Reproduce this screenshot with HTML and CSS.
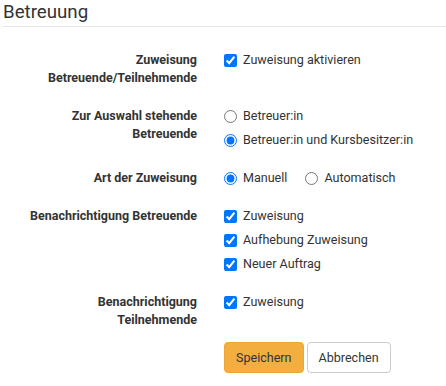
FILE: index.html
```html
<!DOCTYPE html>
<html lang="de">
<head>
<meta charset="utf-8">
<title>Betreuung</title>
<link rel="stylesheet" href="styles.css">
</head>
<body>
<div class="page">
  <h2 class="title">Betreuung</h2>
  <form class="form">
    <div class="row">
      <div class="label">Zuweisung<br>Betreuende/Teilnehmende</div>
      <div class="controls">
        <label class="opt"><input type="checkbox" checked><span>Zuweisung aktivieren</span></label>
      </div>
    </div>
    <div class="row">
      <div class="label">Zur Auswahl stehende<br>Betreuende</div>
      <div class="controls">
        <label class="opt"><input type="radio" name="wahl"><span>Betreuer:in</span></label>
        <label class="opt"><input type="radio" name="wahl" checked><span>Betreuer:in und Kursbesitzer:in</span></label>
      </div>
    </div>
    <div class="row">
      <div class="label">Art der Zuweisung</div>
      <div class="controls inline">
        <label class="opt"><input type="radio" name="art" checked><span>Manuell</span></label>
        <label class="opt"><input type="radio" name="art"><span>Automatisch</span></label>
      </div>
    </div>
    <div class="row">
      <div class="label">Benachrichtigung Betreuende</div>
      <div class="controls">
        <label class="opt"><input type="checkbox" checked><span>Zuweisung</span></label>
        <label class="opt"><input type="checkbox" checked><span>Aufhebung Zuweisung</span></label>
        <label class="opt"><input type="checkbox" checked><span>Neuer Auftrag</span></label>
      </div>
    </div>
    <div class="row last">
      <div class="label">Benachrichtigung<br>Teilnehmende</div>
      <div class="controls">
        <label class="opt"><input type="checkbox" checked><span>Zuweisung</span></label>
      </div>
    </div>
    <div class="row buttons">
      <div></div>
      <div class="btns">
        <button type="button" class="btn primary">Speichern</button>
        <button type="button" class="btn">Abbrechen</button>
      </div>
    </div>
  </form>
</div>
</body>
</html>
```
FILE: styles.css
```css
html, body {
  margin: 0;
  padding: 0;
  background: #fff;
}
body {
  font-family: Roboto, "Liberation Sans", Arial, sans-serif;
  color: #333;
  font-size: 12.55px;
}
.page {
  padding-left: 3px;
}
.title {
  margin: 0;
  font-size: 18.7px;
  font-weight: 400;
  line-height: 24px;
  padding-bottom: 2px;
  border-bottom: 1px solid #e5e5e5;
  color: #333;
}
.form {
  margin-top: 24px;
}
.row {
  display: grid;
  grid-template-columns: 194px 1fr;
  column-gap: 27px;
  margin-bottom: 20px;
}
.row.last {
  margin-bottom: 13px;
}
.label {
  font-size: 12.5px;
  font-weight: 700;
  line-height: 18px;
  text-align: right;
}
.controls {
  display: flex;
  flex-direction: column;
  gap: 6px;
}
.controls.inline {
  flex-direction: row;
  gap: 18px;
}
.opt {
  display: flex;
  align-items: center;
  gap: 6px;
  line-height: 18px;
}
.opt input {
  margin: 0;
  width: 13px;
  height: 13px;
  accent-color: #0075ff;
}
.btns {
  display: flex;
  gap: 3px;
}
.btn {
  font-family: inherit;
  font-size: 12.55px;
  color: #333;
  background: #fff;
  border: 1px solid #ccc;
  border-radius: 4px;
  height: 31px;
  padding: 0 11px;
}
.btn.primary {
  background: #f3ae40;
  border-color: #eea53a;
}
```
